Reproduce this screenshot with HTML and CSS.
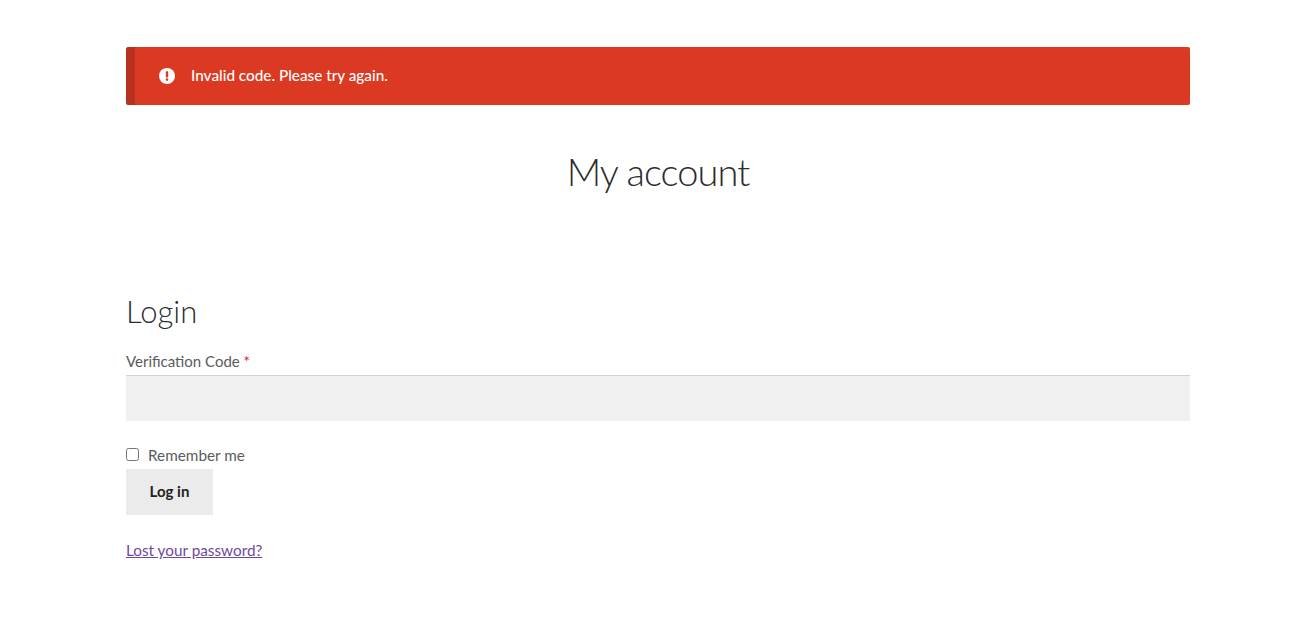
FILE: index.html
```html
<!DOCTYPE html>
<html lang="en">
<head>
    <meta charset="UTF-8">
    <title>My account</title>
    <link rel="stylesheet" href="styles.css">
</head>
<body>

<div class="page">
    <!-- Error notice -->
    <div class="notice-error">
        <svg class="notice-icon" viewBox="0 0 16 16" width="16" height="16">
            <circle cx="8" cy="8" r="8" fill="#fff"/>
            <rect x="6.8" y="3.2" width="2.4" height="6.2" rx="0.6" fill="#dc3923"/>
            <circle cx="8" cy="11.6" r="1.3" fill="#dc3923"/>
        </svg>
        <span>Invalid code. Please try again.</span>
    </div>

    <h1 class="page-title">My account</h1>

    <h2 class="login-title">Login</h2>

    <form class="login-form">
        <label class="form-label" for="code">Verification Code <span class="required">*</span></label>
        <input class="form-input" type="text" id="code">

        <label class="remember">
            <input type="checkbox">
            <span>Remember me</span>
        </label>
        <button class="login-btn" type="button">Log in</button>

        <a class="lost-link" href="#">Lost your password?</a>
    </form>
</div>

</body>
</html>
```

FILE: styles.css
```css
/* Colors */
:root {
    --text: #5b5b5b;
    --heading: #2b2d2f;
    --notice: #dc3923;
    --notice-dark: #b83020;
}

body {
    margin: 0;
    background-color: #fff;
    color: var(--text);
    font-family: Lato, "Open Sans", sans-serif;
    font-size: 15.3px;
}

.page {
    width: 1064px;
    margin-left: 126px;
    padding-top: 47px;
}

.notice-error {
    display: flex;
    align-items: center;
    gap: 16px;
    height: 58px;
    box-sizing: border-box;
    padding-left: 24px;
    background-color: var(--notice);
    border-left: 9px solid var(--notice-dark);
    border-radius: 2px;
    color: #fff;
    font-weight: 500;
}

.notice-error span {
    margin-top: -2px;
}

.page-title {
    margin: 40px 0 0;
    font-size: 38px;
    font-weight: 300;
    line-height: 52px;
    letter-spacing: -0.9px;
    text-align: center;
    color: var(--heading);
}

.login-title {
    margin: 94px 0 0;
    font-size: 31px;
    font-weight: 300;
    line-height: 40px;
    color: var(--heading);
}

.login-form {
    display: flex;
    flex-direction: column;
    align-items: flex-start;
    margin-top: 19px;
}

.form-label {
    font-size: 15px;
    line-height: 22px;
}

.required {
    color: #e01010;
}

.form-input {
    width: 100%;
    height: 46px;
    box-sizing: border-box;
    margin: 3px 0 0;
    border: none;
    border-top: 1px solid #d3d3d3;
    background-color: #f0f0f0;
}

.remember {
    display: flex;
    align-items: center;
    gap: 9px;
    margin-top: 23px;
    line-height: 22px;
}

.remember input {
    margin: 0 0 2px;
}

.login-btn {
    width: 87px;
    height: 46px;
    margin-top: 3px;
    padding: 0 0 2px;
    border: none;
    background-color: #ebebeb;
    color: #222;
    font-family: inherit;
    font-size: 15px;
    font-weight: 700;
}

.lost-link {
    margin-top: 24px;
    line-height: 22px;
    color: #6d4a9e;
}
```
